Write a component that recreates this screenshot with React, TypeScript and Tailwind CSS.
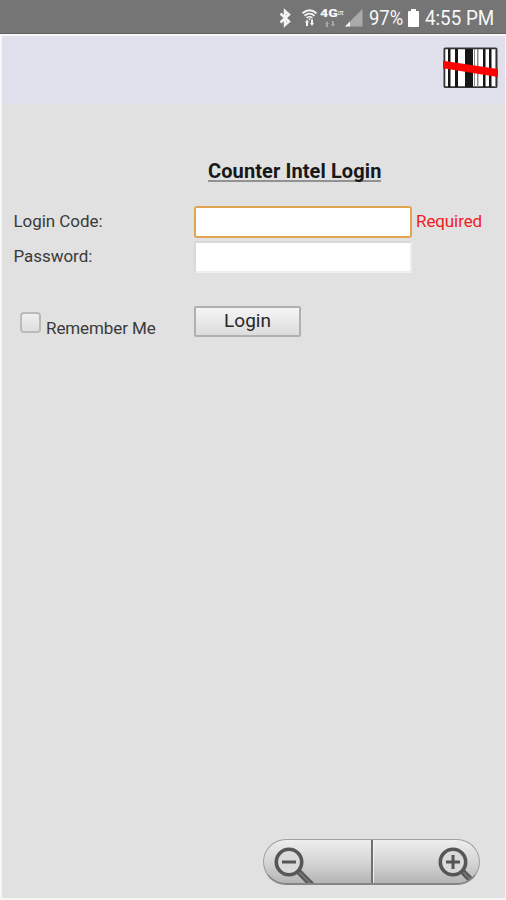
import React from 'react';

const StatusBar: React.FC = () => (
  <div className="h-[34px] bg-[#757575] border-b border-[#626262] flex items-center pt-[3px] pl-[278px] text-[#f8f8f8]">
    {/* Bluetooth */}
    <svg width="14" height="20" viewBox="0 0 14 20" fill="none" stroke="#f4f4f4" strokeWidth="2.5">
      <path d="M2.5 5.5 L11 13.5 L7 17 V3 L11 6.5 L2.5 14.5" />
    </svg>
    {/* Wifi */}
    <svg className="ml-[9px]" width="17" height="20" viewBox="0 0 17 20" fill="none" stroke="#f4f4f4">
      <path d="M1.5 5.3 Q8.5 -0.7 15.5 5.3" strokeWidth="2" />
      <path d="M3.5 7.8 Q8.5 3.5 13.5 7.8" strokeWidth="1.8" />
      <path d="M5.5 10 Q8.5 7.5 11.5 10" strokeWidth="1.5" />
      <path d="M7 10.5 H10 L8.5 12.5 Z" fill="#f4f4f4" stroke="none" />
      <path d="M4 14.5 L6 11.5 L8 14.5 H7 V18 H5 V14.5 Z M9 15 H10 V11.5 H12 V15 H13 L11 18 Z" fill="#f4f4f4" stroke="none" />
    </svg>
    {/* Network type */}
    <div className="ml-[2px] w-[24px] h-[20px] flex flex-col">
      <div className="flex h-[13px] items-start whitespace-nowrap">
        <span className="w-[18px] text-[11px] leading-[12px] font-black">
          <span className="inline-block origin-left scale-x-[1.28]">4G</span>
        </span>
        <span className="w-[5px] text-[6px] font-bold leading-[8px] mt-[1px]">
          <span className="inline-block origin-left scale-x-[0.55]">LTE</span>
        </span>
      </div>
      <svg className="ml-[5px]" width="12" height="6" viewBox="0 0 12 6" fill="#a6a6a6">
        <path d="M0 3 L2 0 L4 3 H3 V6 H1 V3 Z M6 3 H7 V0 H9 V3 H10 L8 6 Z" />
      </svg>
    </div>
    <svg className="ml-px" width="18" height="18" viewBox="0 0 18 18">
      <path d="M0 17.5 L17.5 0 V17.5 Z" fill="#aaa" />
      <path d="M0 17.5 L5 12.5 V17.5 Z" fill="#f4f4f4" />
    </svg>
    <span className="ml-[6px] w-[36px] text-[20px] leading-[24px] whitespace-nowrap">
      <span className="inline-block origin-left scale-x-[0.92]">97%</span>
    </span>
    {/* Battery */}
    <svg className="ml-[3px]" width="11" height="18" viewBox="0 0 11 18" fill="#fff">
      <path d="M3 0 H8 V2 H10 Q11 2 11 3 V17 Q11 18 10 18 H1 Q0 18 0 17 V3 Q0 2 1 2 H3 Z" />
    </svg>
    <span className="ml-[6px] text-[20px] leading-[24px] whitespace-nowrap">
      <span className="inline-block origin-left scale-x-[0.94]">4:55 PM</span>
    </span>
  </div>
);

const BarcodeIcon: React.FC = () => (
  <svg width="56" height="42" viewBox="0 0 56 42">
    <rect x="1.4" y="1.4" width="52.2" height="38.8" rx="1" fill="#fff" stroke="#333" strokeWidth="1.8" />
    <g fill="#161616">
      <rect x="5" y="2" width="2.5" height="38" />
      <rect x="12" y="2" width="3" height="38" />
      <rect x="22" y="2" width="8" height="38" />
      <rect x="40" y="2" width="2.5" height="38" />
      <rect x="46" y="2" width="2.5" height="38" />
    </g>
    <g fill="#8a8a8a">
      <rect x="31" y="2" width="1" height="38" />
      <rect x="34" y="2" width="1.5" height="38" />
      <rect x="52" y="2" width="1" height="38" />
    </g>
    <path d="M-1 13.5 L55 22 V30 L-1 21 Z" fill="#fe0000" />
  </svg>
);

const Magnifier: React.FC<{ plus?: boolean }> = ({ plus }) => (
  <svg className="shrink-0" width="42" height="40" viewBox="0 0 42 40" fill="none" stroke="#565656">
    <path d="M24 25 L38 39" strokeWidth="6" />
    <path d="M25 26 L38 39" stroke="#747474" strokeWidth="2" />
    <circle cx="15" cy="16" r="12.7" fill="#dadada" strokeWidth="3.6" />
    <path d="M8 16 H22" strokeWidth="3" />
    {plus && <path d="M15 9 V23" strokeWidth="3" />}
  </svg>
);

const ZoomControls: React.FC = () => (
  <div className="w-[217px] h-[46px] flex rounded-full border border-[#a0a0a0] border-b-2 border-b-[#858585] bg-linear-to-b from-[#eeeeee] via-[#d6d6d6] to-[#b5b5b5] overflow-hidden">
    <button className="w-[109px] shrink-0 border-r-2 border-[#707070] pl-[10px] pt-[6px] flex items-start">
      <Magnifier />
    </button>
    <button className="flex-1 min-w-0 border-l border-[#f0f0f0] pl-[64px] pt-[6px] flex items-start">
      <Magnifier plus />
    </button>
  </div>
);

const App: React.FC = () => {
  return (
    <div className="h-[900px] w-[506px] overflow-hidden bg-[#f7f7f7] font-['Roboto',sans-serif] flex flex-col">
      <StatusBar />

      <div className="flex-1 mt-[2px] ml-[2px] mr-px mb-[2px] bg-[#e1e1e1] flex flex-col">
        {/* App header */}
        <header className="h-[68px] bg-[#e0e0ed] flex justify-end pt-[11px] pr-[6px]">
          <BarcodeIcon />
        </header>

        <main className="flex-1 pl-[11px] text-[17px] text-[#3a3a3a]">
          <h1 className="mt-[55px] ml-[195px] h-[24px] text-[20px] leading-[24px] font-bold text-[#181818] whitespace-nowrap">
            <span className="inline-block border-b-2 border-[#929292] leading-[18px] h-[21px] pt-px tracking-[0.1px]">Counter Intel Login</span>
          </h1>

          <form className="mt-[23px]">
            <div className="flex h-[32px] items-center">
              <label className="w-[181px] pl-[0.5px] tracking-[-0.05px]">Login Code:</label>
              <input className="w-[218px] h-[32px] bg-white border-2 border-[#e3a44f] rounded-[3px] outline-none" />
              <span className="ml-[4px] tracking-[-0.1px] text-[#f21c24]">Required</span>
            </div>
            <div className="mt-[3px] flex h-[32px] items-center">
              <label className="w-[181px] pl-[0.5px] pb-px tracking-[-0.05px]">Password:</label>
              <input type="password" className="w-[218px] h-[32px] bg-white border-2 border-t-[#d8d8d8] border-l-[#d9d9d9] border-r-[#ededed] border-b-[#eeeeee] outline-none" />
            </div>

            <div className="mt-[33px] flex h-[31px]">
              <label className="w-[181px] pl-[7px] flex">
                <span className="mt-[6px] w-[21px] h-[21px] shrink-0 rounded-[4px] border-2 border-[#bababa] bg-linear-to-b from-[#efefef] to-[#dedede]" />
                <span className="ml-[5px] mt-[10px] leading-[24px] whitespace-nowrap tracking-[-0.1px]">Remember Me</span>
              </label>
              <button type="button" className="w-[107px] h-[31px] pb-px rounded-[2px] border-2 border-[#b0b0b0] bg-linear-to-b from-[#f5f5f5] to-[#dcdcdc] text-[19px] leading-[24px] text-[#282828]">
                Login
              </button>
            </div>
          </form>
        </main>

        <footer className="flex justify-end pr-[25px] pb-[13px]">
          <ZoomControls />
        </footer>
      </div>
    </div>
  );
};

export default App;
